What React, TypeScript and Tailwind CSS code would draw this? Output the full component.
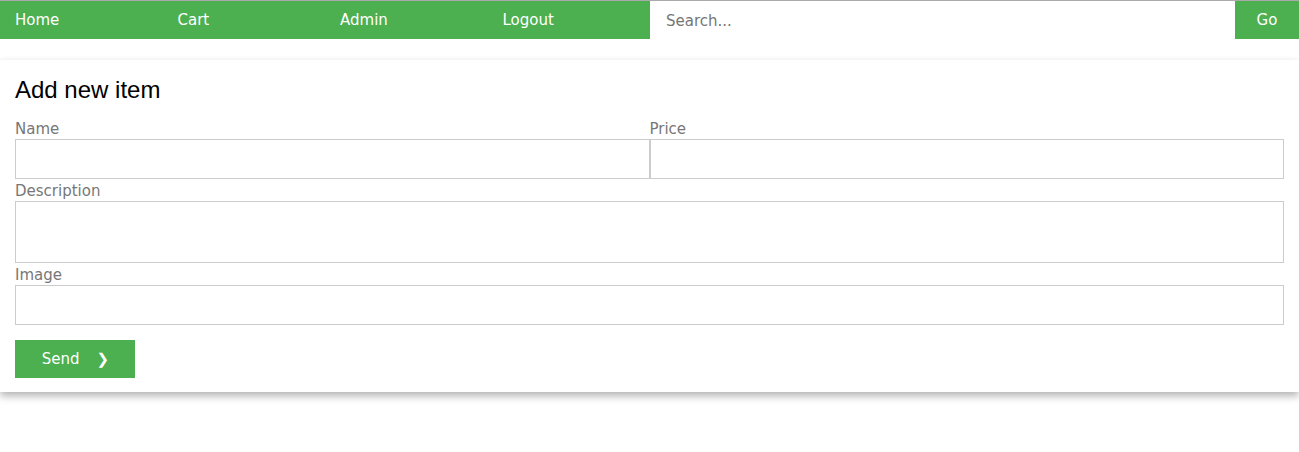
export default function App() {
    return (
        <div className="min-h-screen bg-white text-[15px]" style={{ fontFamily: '"DejaVu Sans", Verdana, sans-serif' }}>
            {/* Top navigation bar */}
            <nav className="flex h-[39px] border-t border-[#aaaaaa] bg-[#4caf50]">
                <div className="grid w-[650px] grid-cols-4">
                    {["Home", "Cart", "Admin", "Logout"].map((item) => (
                        <a key={item} href="#" className="flex items-center px-[15px] pt-px text-white">
                            {item}
                        </a>
                    ))}
                </div>
                <input
                    type="text"
                    placeholder="Search..."
                    className="h-full flex-1 bg-white px-4 pt-px text-[15px] outline-none placeholder:text-[#757575]"
                />
                <button className="w-16 pt-px text-white">Go</button>
            </nav>

            {/* Form card */}
            <div className="mt-[21px] bg-white px-[15px] pt-[13px] pb-[14px] shadow-[0_4px_8px_rgba(0,0,0,0.3)]">
                <h2 className="mb-[13px] text-[24px] leading-[33px] text-black" style={{ fontFamily: '"Liberation Sans", Arial, sans-serif' }}>
                    Add new item
                </h2>
                <div className="flex">
                    <label className="flex flex-1 flex-col">
                        <span className="leading-[20px] text-[#777777]">Name</span>
                        <input type="text" className="h-10 border border-[#cccccc] px-2 outline-none" />
                    </label>
                    <label className="flex flex-1 flex-col">
                        <span className="leading-[20px] text-[#777777]">Price</span>
                        <input type="text" className="h-10 border border-[#cccccc] px-2 outline-none" />
                    </label>
                </div>
                <label className="mt-[2px] flex flex-col">
                    <span className="leading-[20px] text-[#777777]">Description</span>
                    <textarea className="h-[62px] resize-none border border-[#cccccc] px-2 outline-none" />
                </label>
                <label className="mt-[2px] flex flex-col">
                    <span className="leading-[20px] text-[#777777]">Image</span>
                    <input type="text" className="h-10 border border-[#cccccc] px-2 outline-none" />
                </label>
                <button className="mt-[15px] flex h-[38px] w-[120px] items-center justify-center gap-[17px] bg-[#4caf50] pl-px pt-px text-white">
                    <span>Send</span>
                    <span className="font-bold">❯</span>
                </button>
            </div>
        </div>
    );
}
